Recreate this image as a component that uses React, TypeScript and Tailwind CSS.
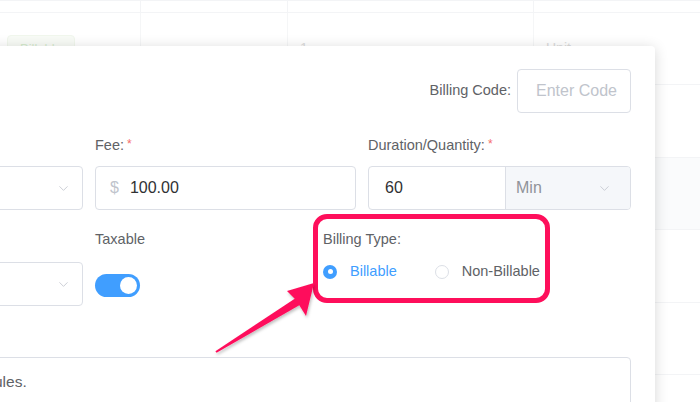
import { ChevronDown } from "lucide-react";

const rows = [
  { h: "h-[72px]", shade: false },
  { h: "h-[73px]", shade: false },
  { h: "h-[72px]", shade: true },
  { h: "h-[73px]", shade: false },
  { h: "h-[72px]", shade: false },
  { h: "h-[40px]", shade: false },
];

function Background() {
  return (
    <div className="flex flex-col">
      <div className="h-[13px] border-y border-[#f3f4f6] flex">
        <div className="w-[141px] border-r border-[#f3f4f6]" />
        <div className="w-[147px] border-r border-[#f3f4f6]" />
        <div className="w-[246px] border-r border-[#f3f4f6]" />
        <div className="flex-1" />
      </div>
      {rows.map((r, i) => (
        <div key={i} className={`${r.h} flex border-b border-[#f3f4f6] ${r.shade ? "bg-[#fafbfc]" : ""}`}>
          <div className="w-[141px] border-r border-[#f5f6f7] flex items-center pl-[7px]">
            {i === 0 && (
              <span className="h-[28px] px-[12px] flex items-center rounded-[4px] bg-[#f8fbf6] border border-[#f1f7ed] text-[13px] text-[#d6ecce]">
                Billable
              </span>
            )}
          </div>
          <div className="w-[147px] border-r border-[#f5f6f7]" />
          <div className="w-[246px] border-r border-[#f5f6f7] flex items-center pl-[12px] text-[14px] text-[#dcdcdc]">
            {i === 0 && "1"}
          </div>
          <div className="flex-1 flex items-center pl-[12px] text-[14px] text-[#dcdcdc]">{i === 0 && "Unit"}</div>
        </div>
      ))}
    </div>
  );
}

function Label({ text, required }: { text: string; required?: boolean }) {
  return (
    <div className="h-[22px] leading-[22px] text-[14.5px] text-[#606266]">
      {text}
      {required && <sup className="text-[#f56c6c] text-[12px] ml-[3px] relative top-[-2px]">*</sup>}
    </div>
  );
}

function Select({ className = "" }: { className?: string }) {
  return (
    <div className={`h-[44px] border border-[#dcdfe6] rounded-[4px] bg-white flex items-center justify-end pr-[11px] ${className}`}>
      <ChevronDown size={15} strokeWidth={1.3} color="#c0c4cc" />
    </div>
  );
}

function Modal() {
  return (
    <div className="absolute left-[-202px] top-[46px] w-[857px] h-[420px] bg-white rounded-[4px] shadow-[0_2px_14px_rgba(0,0,0,0.16)] px-[24px] pt-[23px]">
      <div className="flex justify-end items-center">
        <span className="text-[14.5px] text-[#606266] mr-[6px]">Billing Code:</span>
        <div className="w-[114px] h-[44px] border border-[#dcdfe6] rounded-[4px] pl-[18px] pr-[18px] flex items-center overflow-hidden">
          <span className="text-[16px] text-[#c0c4cc] whitespace-nowrap">Enter Code</span>
        </div>
      </div>

      <div className="grid grid-cols-[261px_261px_1fr] gap-x-[12px] mt-[21px]">
        <div className="pt-[32px]">
          <Select />
        </div>
        <div>
          <Label text="Fee:" required />
          <div className="mt-[10px] h-[44px] border border-[#dcdfe6] rounded-[4px] flex items-center pl-[14px] text-[16px]">
            <span className="text-[#c0c4cc] mr-[11px]">$</span>
            <span className="text-[#303133]">100.00</span>
          </div>
        </div>
        <div>
          <Label text="Duration/Quantity:" required />
          <div className="mt-[10px] h-[44px] border border-[#dcdfe6] rounded-[4px] flex overflow-hidden text-[16px]">
            <div className="w-[136px] flex items-center pl-[16px] text-[#303133]">60</div>
            <div className="flex-1 bg-[#f5f7fa] border-l border-[#dcdfe6] flex items-center justify-between pl-[10px] pr-[18px] text-[#909399]">
              Min
              <ChevronDown size={15} strokeWidth={1.3} color="#c0c4cc" />
            </div>
          </div>
        </div>
      </div>

      <div className="flex gap-x-[12px] mt-[18px]">
        <div className="w-[261px] pt-[34px]">
          <Select />
        </div>
        <div className="w-[216px]">
          <Label text="Taxable" />
          <div className="mt-[24px] w-[45px] h-[23px] rounded-full bg-[#409eff] flex items-center justify-end pr-[3px]">
            <div className="w-[17px] h-[17px] rounded-full bg-white" />
          </div>
        </div>
        <div className="flex-1">
          <Label text="Billing Type:" />
          <div className="mt-[11px] flex items-center text-[14.5px]">
            <span className="w-[14px] h-[14px] rounded-full bg-[#409eff] flex items-center justify-center">
              <span className="w-[5px] h-[5px] rounded-full bg-white" />
            </span>
            <span className="ml-[13px] text-[#409eff]">Billable</span>
            <span className="ml-[38px] w-[14px] h-[14px] rounded-full border border-[#dcdfe6] bg-white" />
            <span className="ml-[13px] text-[#606266]">Non-Billable</span>
          </div>
        </div>
      </div>

      <div className="mt-[51px] h-[80px] border border-[#dcdfe6] rounded-[4px] pl-[15px] pt-[12px] text-[15.5px] text-[#606266] whitespace-nowrap">
        Billed per all fee schedules.
      </div>
    </div>
  );
}

function Annotation() {
  return (
    <>
      <div className="absolute left-[313px] top-[214px] w-[237px] h-[89px] border-[5px] border-[#fe0f5b] rounded-[14px] pointer-events-none" />
      <svg className="absolute left-0 top-0 pointer-events-none" width="700" height="402" viewBox="0 0 700 402">
        <defs>
          <filter id="sh" x="-20%" y="-20%" width="140%" height="140%">
            <feDropShadow dx="1" dy="2" stdDeviation="1.5" floodColor="#000" floodOpacity="0.25" />
          </filter>
        </defs>
        <polygon
          filter="url(#sh)"
          fill="#fe0f5b"
          points="215.4,351.2 294.7,298.7 287,291 314,283 306,316 299.3,305.3 216.6,352.8"
        />
      </svg>
    </>
  );
}

export default function App() {
  return (
    <div className="relative w-[700px] h-[402px] overflow-hidden bg-white font-['Liberation_Sans',Arial,sans-serif]">
      <Background />
      <Modal />
      <Annotation />
    </div>
  );
}
